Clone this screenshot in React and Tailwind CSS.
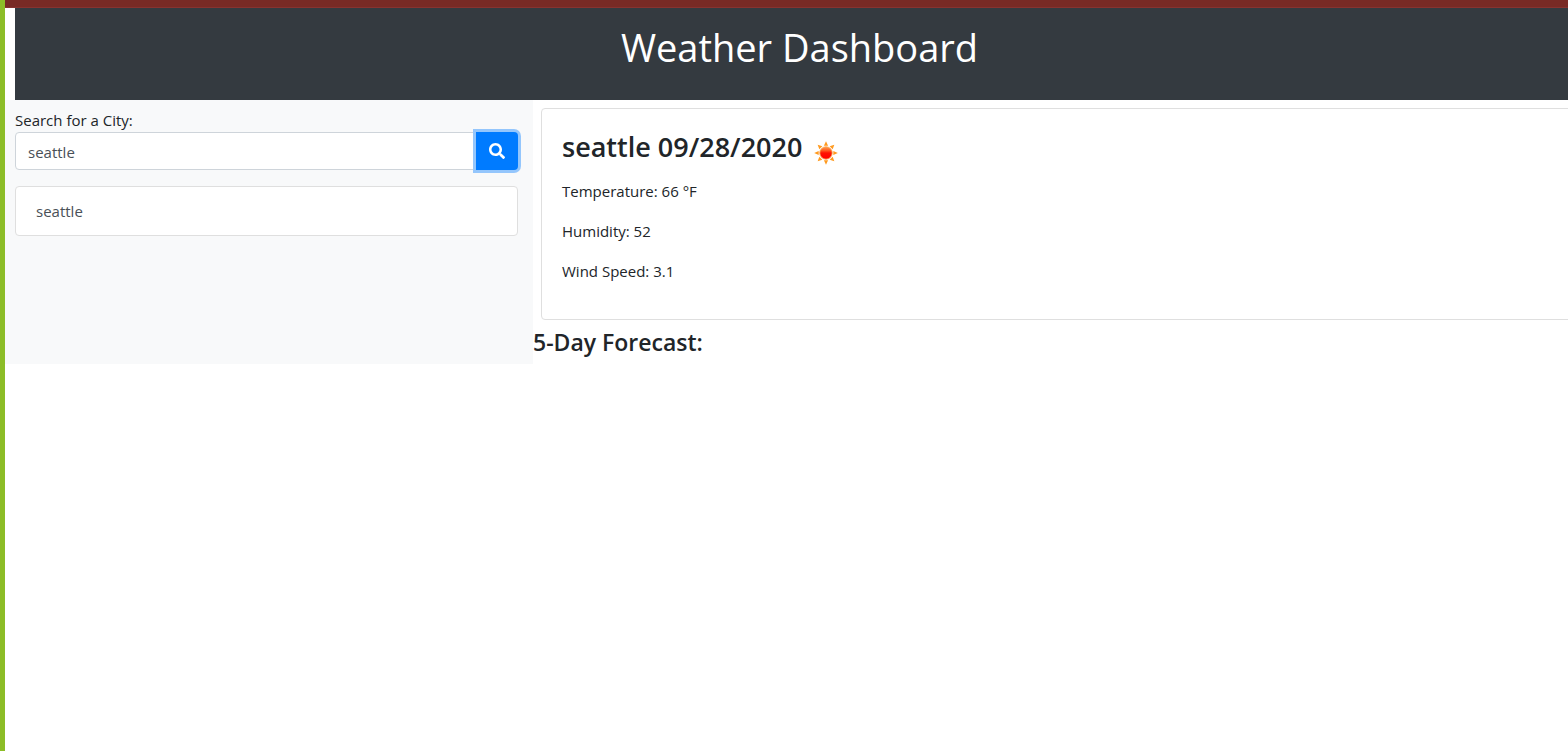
import { useState } from "react";

const conditions = [
  { label: "Temperature", value: "66 °F" },
  { label: "Humidity", value: "52" },
  { label: "Wind Speed", value: "3.1" },
];

const rays = [0, 45, 90, 135, 180, 225, 270, 315];

function SearchIcon() {
  return (
    <svg viewBox="0 0 512 512" className="h-4 w-4" fill="currentColor" aria-hidden="true">
      <path d="M505 442.7L405.3 343c-4.5-4.5-10.6-7-17-7H372c27.6-35.3 44-79.7 44-128C416 93.1 322.9 0 208 0S0 93.1 0 208s93.1 208 208 208c48.3 0 92.7-16.4 128-44v16.3c0 6.4 2.5 12.5 7 17l99.7 99.7c9.4 9.4 24.6 9.4 33.9 0l28.3-28.3c9.4-9.4 9.4-24.6.1-34zM208 336c-70.7 0-128-57.2-128-128 0-70.7 57.2-128 128-128 70.7 0 128 57.2 128 128 0 70.7-57.2 128-128 128z" />
    </svg>
  );
}

function SunIcon() {
  return (
    <svg viewBox="-12 -12 24 24" className="h-6 w-6" role="img" aria-label="Clear sky">
      <defs>
        <linearGradient id="sun-disc" x1="0" y1="0" x2="0" y2="1">
          <stop offset="0" stopColor="#ffa050" />
          <stop offset="0.3" stopColor="#ff5a20" />
          <stop offset="0.5" stopColor="#ff1200" />
          <stop offset="1" stopColor="#ff0000" />
        </linearGradient>
      </defs>
      {rays.map((angle) => (
        <path
          key={angle}
          d="M0 -11.8L2.1 -7.3H-2.1Z"
          fill="#ff9a1f"
          transform={`rotate(${angle})`}
        />
      ))}
      <circle r="6.2" fill="url(#sun-disc)" stroke="#fba04a" strokeWidth="0.9" />
    </svg>
  );
}

export default function App() {
  const [city, setCity] = useState("seattle");

  return (
    <div className="min-h-screen overflow-hidden border-l-[5px] border-[#8cbd27] bg-white font-['Open_Sans','Noto_Sans',sans-serif] text-[15px] leading-6 text-[#212529]">
      <div className="h-2 border-b border-[#873330] bg-[#782a25]" />
      <div className="-mr-[21px]">
        <header className="mr-[5px] ml-[10px] h-[92px] bg-[#343a40] pt-4 text-center text-white">
          <h1 className="text-[38px] leading-[46px]">Weather Dashboard</h1>
        </header>

        <main className="grid grid-cols-3">
          <aside className="bg-[#f8f9fa] pt-2 pr-[15px] pl-[10px]">
            <form onSubmit={(event) => event.preventDefault()}>
              <label htmlFor="city" className="block">
                Search for a City:
              </label>
              <div className="flex h-[38px]">
                <input
                  id="city"
                  type="text"
                  value={city}
                  onChange={(event) => setCity(event.target.value)}
                  className="min-w-0 flex-1 rounded-l border border-[#ced4da] bg-white px-3 pt-0.5 text-[#495057] outline-none"
                />
                <button
                  type="submit"
                  aria-label="Search"
                  className="flex w-[42px] items-center justify-center rounded-r bg-[#007bff] text-white ring-3 ring-[#94c6fc]"
                >
                  <SearchIcon />
                </button>
              </div>
            </form>
            <ul className="mt-4">
              <li>
                <button
                  type="button"
                  className="block h-[50px] w-full rounded border border-[#dfdfdf] bg-white px-5 text-left text-[#495057]"
                >
                  seattle
                </button>
              </li>
            </ul>
          </aside>

          <section className="col-span-2">
            <article className="m-2 rounded border border-[#dfdfdf] bg-white p-5">
              <div className="mb-3 flex h-[38px] items-start gap-3">
                <h2 className="text-[27px] leading-9 font-semibold">seattle 09/28/2020</h2>
                <div className="pt-3">
                  <SunIcon />
                </div>
              </div>
              {conditions.map(({ label, value }) => (
                <p key={label} className="mb-4">
                  {label}: {value}
                </p>
              ))}
            </article>
            <h3 className="mb-2 text-[23px] leading-7 font-semibold">5-Day Forecast:</h3>
          </section>
        </main>
      </div>
    </div>
  );
}
